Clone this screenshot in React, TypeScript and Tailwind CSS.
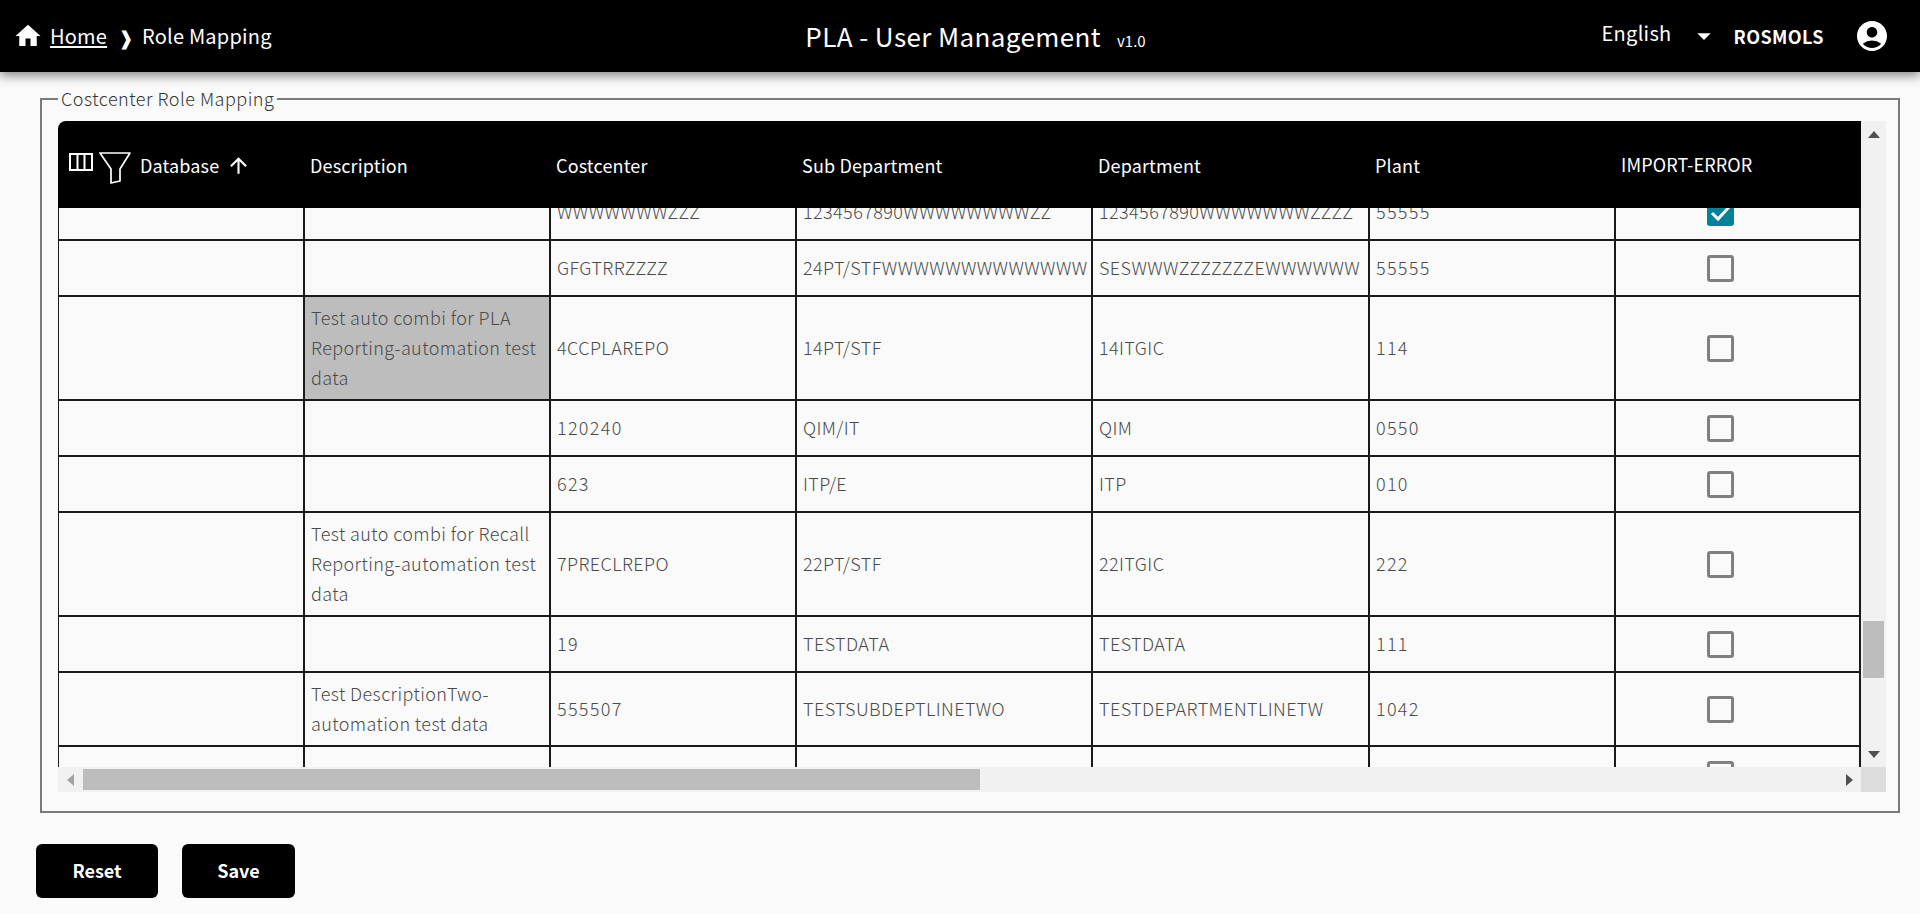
import { MdAccountCircle, MdArrowDropDown, MdArrowUpward, MdHome } from "react-icons/md";

const font = "font-['Noto_Sans_CJK_JP','Noto_Sans',sans-serif]";
const grid = "grid grid-cols-[247px_246px_246px_296px_277px_246px_245px]";

interface Row {
  description?: string[];
  highlight?: boolean;
  costcenter: string;
  sub: string;
  dept: string;
  plant: string;
  checked?: boolean;
  height: string;
}

const rows: Row[] = [
  { costcenter: "WWWWWWWZZZ", sub: "1234567890WWWWWWWWZZ", dept: "1234567890WWWWWWWZZZZ", plant: "55555", checked: true, height: "h-[56px]" },
  { costcenter: "GFGTRRZZZZ", sub: "24PT/STFWWWWWWWWWWWWW", dept: "SESWWWZZZZZZZEWWWWWW", plant: "55555", height: "h-[56px]" },
  { description: ["Test auto combi for PLA", "Reporting-automation test", "data"], highlight: true, costcenter: "4CCPLAREPO", sub: "14PT/STF", dept: "14ITGIC", plant: "114", height: "h-[104px]" },
  { costcenter: "120240", sub: "QIM/IT", dept: "QIM", plant: "0550", height: "h-[56px]" },
  { costcenter: "623", sub: "ITP/E", dept: "ITP", plant: "010", height: "h-[56px]" },
  { description: ["Test auto combi for Recall", "Reporting-automation test", "data"], costcenter: "7PRECLREPO", sub: "22PT/STF", dept: "22ITGIC", plant: "222", height: "h-[104px]" },
  { costcenter: "19", sub: "TESTDATA", dept: "TESTDATA", plant: "111", height: "h-[56px]" },
  { description: ["Test DescriptionTwo-", "automation test data"], costcenter: "555507", sub: "TESTSUBDEPTLINETWO", dept: "TESTDEPARTMENTLINETW", plant: "1042", height: "h-[74px]" },
  { costcenter: "", sub: "", dept: "", plant: "", height: "h-[56px]" },
];

function Checkbox({ checked }: { checked?: boolean }) {
  if (checked) {
    return (
      <span className="block h-[27px] w-[27px] rounded-[3px] bg-[#00829b]">
        <svg width="27" height="27" viewBox="0 0 27 27" fill="none" stroke="white" strokeWidth="3">
          <polyline points="5,14 11,20 22,8" />
        </svg>
      </span>
    );
  }
  return <span className="block h-[27px] w-[27px] rounded-[3px] border-[3px] border-[#808080]" />;
}

function Cell({ children, className = "" }: { children?: React.ReactNode; className?: string }) {
  return (
    <div className={`flex items-center overflow-hidden whitespace-nowrap border-r-2 border-[#1a1a1a] ${className}`}>
      {children}
    </div>
  );
}

function Value({ text }: { text: string }) {
  // digits sit wider than letters in the source font
  const spacing = /^\d+$/.test(text) ? "tracking-[1.3px]" : "tracking-[0.4px]";
  return <span className={`pb-[2px] pl-[6px] ${spacing}`}>{text}</span>;
}

function TableRow({ row }: { row: Row }) {
  return (
    <div className={`${grid} ${row.height} border-b-2 border-[#1a1a1a] text-[18px] font-light text-[#4a4a4a]`}>
      <Cell className="border-l-[1px]" />
      <Cell className={row.highlight ? "bg-[#bdbdbd]" : ""}>
        {row.description && (
          <div className="pb-[2px] pl-[6px] leading-[30px] tracking-[0.4px]">
            {row.description.map((line) => (
              <div key={line}>{line}</div>
            ))}
          </div>
        )}
      </Cell>
      <Cell><Value text={row.costcenter} /></Cell>
      <Cell><Value text={row.sub} /></Cell>
      <Cell><Value text={row.dept} /></Cell>
      <Cell><Value text={row.plant} /></Cell>
      <Cell className="pl-[91px]">
        <Checkbox checked={row.checked} />
      </Cell>
    </div>
  );
}

function ColumnsIcon() {
  return (
    <svg width="24" height="18" viewBox="0 0 24 18" fill="none" stroke="white" strokeWidth="2">
      <rect x="1" y="1" width="22" height="16" />
      <path d="M8.5 1v16M15.5 1v16" />
    </svg>
  );
}

function FilterIcon() {
  return (
    <svg width="32" height="32" viewBox="0 0 32 32" fill="none" stroke="white" strokeWidth="1.7">
      <path d="M1 1h30L21 17v12l-9 2V17z" strokeLinejoin="round" />
    </svg>
  );
}

function Triangle({ dir }: { dir: "up" | "down" | "left" | "right" }) {
  const points = {
    up: "0,8 12,8 6,1",
    down: "0,1 12,1 6,8",
    left: "8,0 8,12 1,6",
    right: "1,0 1,12 8,6",
  }[dir];
  const size = dir === "up" || dir === "down" ? "h-[9px] w-[12px]" : "h-[12px] w-[9px]";
  const viewBox = dir === "up" || dir === "down" ? "0 0 12 9" : "0 0 9 12";
  return (
    <svg className={size} viewBox={viewBox} fill={dir === "left" ? "#a3a3a3" : "#505050"}>
      <polygon points={points} />
    </svg>
  );
}

export default function App() {
  return (
    <div className={`flex h-screen flex-col overflow-hidden bg-[#fafafa] ${font}`}>
      {/* Top bar */}
      <header className="grid h-[72px] shrink-0 grid-cols-[1fr_auto_1fr] items-center bg-black pl-[13px] pr-[30px] text-white shadow-[0_4px_10px_rgba(0,0,0,0.45)]">
        <div className="flex items-center text-[20px]">
          <MdHome size={30} />
          <a className="ml-[7px] tracking-[0.2px] underline underline-offset-2">Home</a>
          <span className="ml-[11px] text-[19px] leading-none">❱</span>
          <span className="ml-[8px] tracking-[0.2px]">Role Mapping</span>
        </div>
        <div className="-mt-[2px] ml-[48px] flex items-baseline">
          <span className="text-[26px] tracking-[0.4px]">PLA - User Management</span>
          <span className="ml-[16px] text-[15px]">v1.0</span>
        </div>
        <div className="flex items-center justify-end">
          <span className="-mt-[7px] text-[20px] tracking-[0.3px]">English</span>
          <MdArrowDropDown size={32} className="ml-[16px]" />
          <span className="ml-[14px] text-[18px] font-bold tracking-[0.4px]">ROSMOLS</span>
          <MdAccountCircle size={36} className="ml-[30px]" />
        </div>
      </header>

      <main className="flex flex-col pl-[40px] pr-[20px]">
        <fieldset className="mt-[13px] h-[728px] border-2 border-[#7a7a7a] pb-[19px] pl-[16px] pr-[12px]">
          <legend className="px-[3px] text-[18px] font-light tracking-[0.5px] text-[#333]">Costcenter Role Mapping</legend>

          <div className="mt-[9px] flex h-[646px]">
            <div className="flex w-[1803px] flex-col">
              {/* Table head */}
              <div className={`${grid} h-[87px] shrink-0 items-center rounded-tl-[8px] bg-black text-[18px] tracking-[0.15px] text-white`}>
                <div className="flex items-center pl-[11px]">
                  <span className="-mt-[6px]"><ColumnsIcon /></span>
                  <span className="ml-[6px] mt-[6px]"><FilterIcon /></span>
                  <span className="ml-[9px] mt-[2px]">Database</span>
                  <MdArrowUpward size={25} className="ml-[7px] mt-[2px]" />
                </div>
                <div className="mt-[2px] pl-[5px]">Description</div>
                <div className="mt-[2px] pl-[5px]">Costcenter</div>
                <div className="mt-[2px] pl-[5px]">Sub Department</div>
                <div className="mt-[2px] pl-[5px]">Department</div>
                <div className="mt-[2px] pl-[5px]">Plant</div>
                <div className="pl-[5px]">IMPORT-ERROR</div>
              </div>
              {/* Rows, scrolled part way */}
              <div className="min-h-0 flex-1 overflow-hidden">
                <div className="-mt-[23px]">
                  {rows.map((row, i) => (
                    <TableRow key={i} row={row} />
                  ))}
                </div>
              </div>
            </div>
            {/* Vertical scrollbar */}
            <div className="flex w-[25px] flex-col items-center bg-[#f1f1f1]">
              <div className="mt-[9px]"><Triangle dir="up" /></div>
              <div className="mt-[482px] h-[57px] w-[21px] bg-[#bdbdbd]" />
              <div className="mt-[72px]"><Triangle dir="down" /></div>
            </div>
          </div>

          {/* Horizontal scrollbar */}
          <div className="flex h-[25px]">
            <div className="flex w-[1803px] items-center bg-[#f1f1f1] pl-[8px]">
              <Triangle dir="left" />
              <div className="ml-[8px] h-[21px] w-[897px] bg-[#bdbdbd]" />
              <div className="ml-auto mr-[7px]"><Triangle dir="right" /></div>
            </div>
            <div className="w-[25px] bg-[#dcdcdc]" />
          </div>
        </fieldset>
      </main>

      <div className="ml-[36px] mt-[31px] flex gap-[24px]">
        <button className="h-[54px] w-[122px] rounded-[6px] bg-black pb-[2px] text-[18px] font-bold text-white">Reset</button>
        <button className="h-[54px] w-[113px] rounded-[6px] bg-black pb-[2px] text-[18px] font-bold text-white">Save</button>
      </div>
    </div>
  );
}
